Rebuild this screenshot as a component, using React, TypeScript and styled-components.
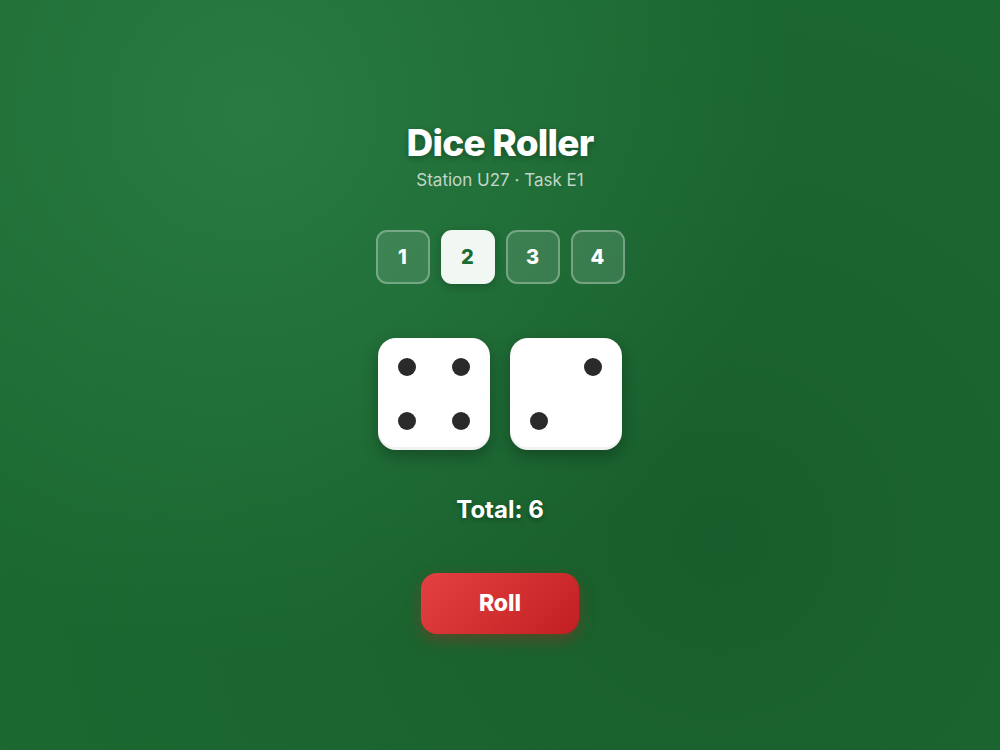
import { useState } from 'react';
import styled, { createGlobalStyle } from 'styled-components';

const GlobalStyle = createGlobalStyle`
  * { box-sizing: border-box; }
  html, body { margin: 0; padding: 0; }
  body {
    font-family: Inter, "Liberation Sans", sans-serif;
    background: #1b6730;
  }
`;

const Page = styled.main`
  min-height: 100vh;
  padding-top: 4px;
  display: flex;
  flex-direction: column;
  align-items: center;
  justify-content: center;
  background:
    radial-gradient(circle at 25% 15%, rgba(44, 128, 72, 0.75) 0%, rgba(44, 128, 72, 0) 55%),
    radial-gradient(circle at 72% 72%, #185e2c 0%, #1b6530 45%, #1c6a32 100%);
  color: #fff;
`;

const Title = styled.h1`
  margin: 0;
  font-size: 37px;
  font-weight: 800;
  line-height: 44px;
  letter-spacing: -0.02em;
  text-shadow: 0 2px 6px rgba(0, 0, 0, 0.3);
`;

const Subtitle = styled.div`
  margin-top: 4px;
  font-size: 17px;
  line-height: 22px;
  color: rgba(255, 255, 255, 0.72);
`;

const CountRow = styled.div`
  display: flex;
  gap: 11px;
  margin-top: 39px;
`;

const CountBtn = styled.button<{ $active: boolean }>`
  width: 54px;
  height: 54px;
  border-radius: 11px;
  border: 2px solid ${({ $active }) => ($active ? '#f1f7f2' : 'rgba(255, 255, 255, 0.3)')};
  background: ${({ $active }) => ($active ? '#f1f7f2' : 'rgba(255, 255, 255, 0.12)')};
  color: ${({ $active }) => ($active ? '#1b6b32' : '#fff')};
  font-family: Inter, "Liberation Sans", sans-serif;
  font-size: 20px;
  font-weight: 800;
  cursor: pointer;
  box-shadow: ${({ $active }) => ($active ? '0 2px 8px rgba(0, 0, 0, 0.2)' : 'none')};
`;

const DiceRow = styled.div`
  display: flex;
  gap: 20px;
  margin-top: 54px;
`;

const Die = styled.div`
  width: 112px;
  height: 112px;
  border-radius: 18px;
  background: #fff;
  padding: 20px;
  display: grid;
  grid-template-columns: repeat(3, 18px);
  grid-template-rows: repeat(3, 18px);
  justify-content: space-between;
  align-content: space-between;
  box-shadow: 0 6px 16px rgba(0, 0, 0, 0.28), inset 0 -3px 0 rgba(0, 0, 0, 0.05);
`;

const Pip = styled.span<{ $on: boolean }>`
  width: 18px;
  height: 18px;
  border-radius: 50%;
  background: ${({ $on }) => ($on ? '#2a2a2a' : 'transparent')};
`;

const Total = styled.div`
  margin-top: 44px;
  font-size: 24px;
  font-weight: 700;
  line-height: 31px;
  text-shadow: 0 2px 5px rgba(0, 0, 0, 0.3);
`;

const RollBtn = styled.button`
  margin-top: 48px;
  width: 158px;
  height: 61px;
  border: none;
  border-radius: 16px;
  background: linear-gradient(135deg, #e34141 0%, #c21f22 100%);
  color: #fff;
  font-family: Inter, "Liberation Sans", sans-serif;
  font-size: 23px;
  font-weight: 800;
  cursor: pointer;
  box-shadow: 0 6px 16px rgba(200, 30, 30, 0.35);
`;

// pip positions in a 3x3 grid (index 0..8)
const PIPS: Record<number, number[]> = {
  1: [4],
  2: [2, 6],
  3: [2, 4, 6],
  4: [0, 2, 6, 8],
  5: [0, 2, 4, 6, 8],
  6: [0, 2, 3, 5, 6, 8],
};

export default function App() {
  const [count, setCount] = useState(2);
  const [values, setValues] = useState<number[]>([4, 2, 1, 1]);

  const shown = values.slice(0, count);
  const total = shown.reduce((a, b) => a + b, 0);

  const roll = () =>
    setValues(values.map(() => 1 + Math.floor(Math.random() * 6)));

  return (
    <>
      <GlobalStyle />
      <Page>
        <Title>Dice Roller</Title>
        <Subtitle>Station U27 · Task E1</Subtitle>

        <CountRow>
          {[1, 2, 3, 4].map((n) => (
            <CountBtn key={n} $active={n === count} onClick={() => setCount(n)}>
              {n}
            </CountBtn>
          ))}
        </CountRow>

        <DiceRow>
          {shown.map((v, i) => (
            <Die key={i}>
              {Array.from({ length: 9 }, (_, k) => (
                <Pip key={k} $on={PIPS[v].includes(k)} />
              ))}
            </Die>
          ))}
        </DiceRow>

        <Total>Total: {total}</Total>
        <RollBtn onClick={roll}>Roll</RollBtn>
      </Page>
    </>
  );
}
